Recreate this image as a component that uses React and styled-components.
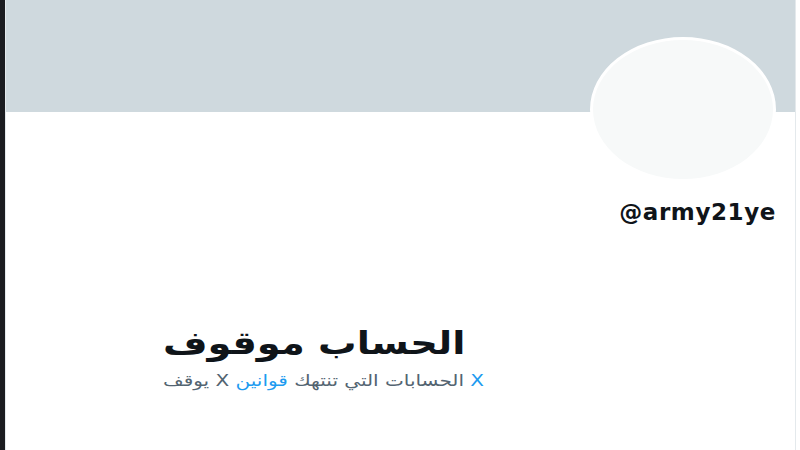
import React from 'react';
import styled, {createGlobalStyle} from 'styled-components';

const GlobalStyle = createGlobalStyle`
    html, body {
        margin: 0;
        padding: 0;
        background: #ffffff;
        font-family: "DejaVu Sans", "Liberation Sans", sans-serif;
    }
`;

const Page = styled.div`
    display: flex;
    width: 800px;
    height: 450px;
    overflow: hidden;
`;

const DarkEdge = styled.div`
    width: 5px;
    background: #1b1c20;
    flex-shrink: 0;
`;

const Panel = styled.div`
    width: 789px;
    border-left: 1px solid #e4e9ec;
    border-right: 1px solid #e4e9ec;
    display: flex;
    flex-direction: column;
`;

const Banner = styled.div`
    height: 112px;
    background: #cfd9de;
`;

const ProfileHead = styled.div`
    display: flex;
    flex-direction: column;
    align-items: flex-end;
    padding-right: 19px;
`;

const Avatar = styled.div`
    width: 180px;
    height: 139px;
    margin-top: -75px;
    border-radius: 50%;
    background: #f7f9f9;
    border: 3px solid #ffffff;
`;

const Handle = styled.div`
    margin-top: 17px;
    font-size: 23px;
    font-weight: bold;
    color: #0f1419;
    letter-spacing: 0.6px;
`;

const Notice = styled.div`
    display: flex;
    flex-direction: column;
    align-items: flex-start;
    padding-left: 157px;
    margin-top: 96px;
`;

const Title = styled.div`
    direction: rtl;
    font-size: 32px;
    font-weight: bold;
    color: #0f1419;
    line-height: 44px;
    transform: scaleX(1.2);
    transform-origin: left center;
`;

const Subtitle = styled.div`
    direction: rtl;
    font-size: 16px;
    color: #536471;
    line-height: 22px;
    margin-top: 5px;
    transform: scaleX(1.25);
    transform-origin: left center;
`;

const Link = styled.span`
    color: #1d9bf0;
`;

export default function App() {
    return (
        <>
            <GlobalStyle/>
            <Page>
                <DarkEdge/>
                <Panel>
                    <Banner/>
                    <ProfileHead>
                        <Avatar/>
                        <Handle>@army21ye</Handle>
                    </ProfileHead>
                    <Notice>
                        <Title>الحساب موقوف</Title>
                        <Subtitle>
                            <Link>X</Link> الحسابات التي تنتهك <Link>قوانين</Link> X يوقف
                        </Subtitle>
                    </Notice>
                </Panel>
            </Page>
        </>
    );
}
